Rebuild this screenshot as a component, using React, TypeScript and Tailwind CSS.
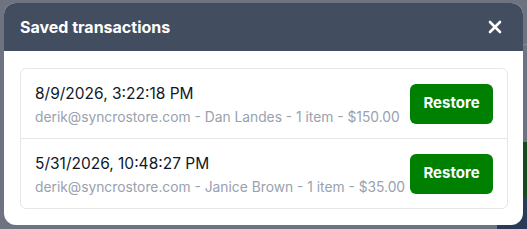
import React from "react";

const rows = [
  { date: "8/9/2026, 3:22:18 PM", detail: "derik@syncrostore.com - Dan Landes - 1 item - $150.00" },
  { date: "5/31/2026, 10:48:27 PM", detail: "derik@syncrostore.com - Janice Brown - 1 item - $35.00" },
];

export default function App() {
  return (
    <div
      className="w-[527px] h-[229px] bg-[#6e7382] overflow-hidden relative pl-[4px] pt-[3px]"
      style={{ fontFamily: "Inter, 'Noto Sans', sans-serif" }}
    >
      {/* dimmed page content peeking behind the overlay */}
      <div className="absolute left-[500px] top-[44px] w-[40px] h-[1px] bg-[#858a96]" />
      <div className="absolute left-[500px] top-[142px] w-[40px] h-[55px] bg-[#174a1f]" />
      <div className="absolute left-[497px] top-[197px] w-[40px] h-[40px] bg-[#2a3b58]" />
      <div className="w-[519px] rounded-xl overflow-hidden bg-white relative z-10">
        <div className="h-[48px] bg-[#434d60] flex items-center justify-between pl-4 pr-[21px]">
          <span className="text-white font-bold text-[16px]">Saved transactions</span>
          <svg width="14" height="14" viewBox="0 0 14 14" className="text-white">
            <path d="M2 2 L12 12 M12 2 L2 12" stroke="currentColor" strokeWidth="2.6" strokeLinecap="round" />
          </svg>
        </div>
        <div className="pt-[17px] pb-[16px] pl-4 pr-[15px]">
          <div className="border border-gray-200 rounded-md">
            {rows.map((r, i) => (
              <div
                key={i}
                className={`flex items-center justify-between h-[69px] pl-[14px] pr-[14px] ${i > 0 ? "border-t border-gray-200 h-[70px]" : ""}`}
              >
                <div className="flex flex-col whitespace-nowrap pt-[1px]">
                  <span className="text-[15.5px] text-gray-900 leading-[24px]">{r.date}</span>
                  <span className="text-[13.8px] text-gray-400 leading-[20px] mt-[1px]">{r.detail}</span>
                </div>
                <button className="w-[83px] h-[40px] bg-[#008000] text-white font-bold text-[15px] rounded-md shrink-0">
                  Restore
                </button>
              </div>
            ))}
          </div>
        </div>
      </div>
    </div>
  );
}
